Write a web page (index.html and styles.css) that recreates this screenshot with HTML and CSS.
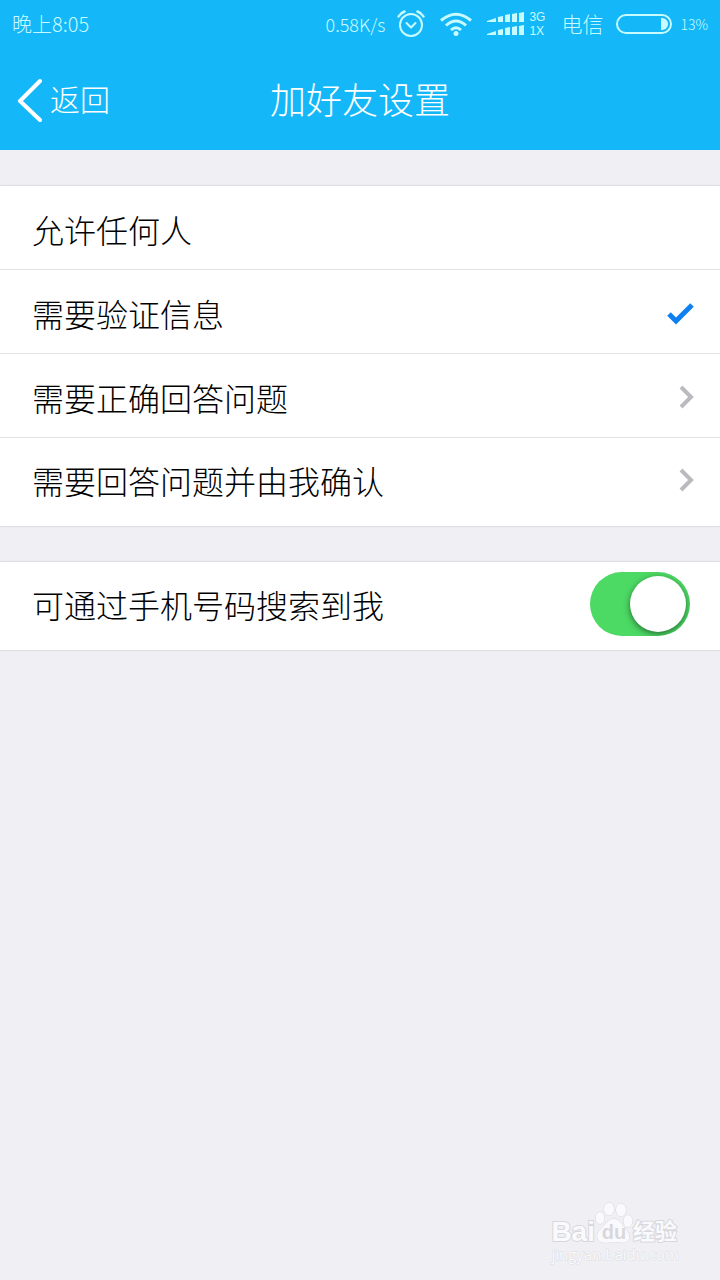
FILE: index.html
```html
<!DOCTYPE html>
<html lang="zh-CN">
<head>
    <meta charset="UTF-8">
    <meta name="viewport" content="width=device-width, initial-scale=1.0">
    <title>加好友设置</title>
    <link rel="stylesheet" href="styles.css">
</head>
<body>
    <header class="header">
        <div class="status-bar">
            <span class="status-time">晚上8:05</span>
            <span class="status-speed">0.58K/s</span>
            <svg class="icon-alarm" width="28" height="28" viewBox="0 0 28 28" fill="none" stroke="currentColor" stroke-width="2" stroke-linecap="round" stroke-linejoin="round">
                <circle cx="14" cy="15" r="11"/>
                <path d="M9.500 13l4.500 4.500 4.500-4.500"/>
                <path stroke-width="2.500" d="M1.500 6.500Q3.500 3 7.500 1.500M26.500 6.500Q24.500 3 20.500 1.500"/>
            </svg>
            <svg class="icon-wifi" width="32" height="24" viewBox="0 0 32 24" fill="none" stroke="currentColor" stroke-width="3">
                <path d="M1 8.500Q16-4 31 8.500M6 13.500Q16 4.500 26 13.500M11 18Q16 13.500 21 18"/>
                <circle cx="16" cy="21.500" r="2.500" fill="currentColor" stroke="none"/>
            </svg>
            <svg class="icon-signal" width="38" height="24" viewBox="0 0 38 24" fill="currentColor">
                <path d="M0 9l9-3v4H0zM11 5l5-1v6h-5zM18 3l5-1v8h-5zM25 2l5-1v9h-5zM32 1l5-1v10h-5z"/>
                <path d="M0 22l9-3v4H0zM11 18l5-1v6h-5zM18 16l5-1v8h-5zM25 15l5-1v9h-5zM32 14l5-1v10h-5z"/>
            </svg>
            <span class="network"><span>3G</span><span>1X</span></span>
            <span class="carrier">电信</span>
            <svg class="icon-battery" width="56" height="20" viewBox="0 0 56 20">
                <rect x="1" y="1" width="54" height="18" rx="9" fill="none" stroke="currentColor" stroke-width="2"/>
                <path d="M45 4h1a6 6 0 0 1 0 12h-1z" fill="currentColor"/>
            </svg>
            <span class="battery-level">13%</span>
        </div>
        <nav class="nav-bar">
            <a class="back" href="#">
                <svg width="26" height="48" viewBox="0 0 26 48" fill="none" stroke="currentColor" stroke-width="4" stroke-linecap="round" stroke-linejoin="round">
                    <path d="M24 7L4 27l20 19"/>
                </svg>
                <span>返回</span>
            </a>
            <h1>加好友设置</h1>
        </nav>
    </header>

    <main>
        <div class="group">
            <label class="row">
                <span>允许任何人</span>
                <input type="radio" name="verify" value="anyone">
                <svg class="check" width="28" height="24" viewBox="0 0 28 24" fill="none" stroke="currentColor" stroke-width="5"><path d="M3 13l7 7L26 4"/></svg>
            </label>
            <label class="row">
                <span>需要验证信息</span>
                <input type="radio" name="verify" value="message" checked>
                <svg class="check" width="28" height="24" viewBox="0 0 28 24" fill="none" stroke="currentColor" stroke-width="5"><path d="M3 13l7 7L26 4"/></svg>
            </label>
            <a class="row" href="#">
                <span>需要正确回答问题</span>
                <svg class="chevron" width="16" height="24" viewBox="0 0 16 24" fill="none" stroke="currentColor" stroke-width="4"><path d="M3 2l10 10L3 22"/></svg>
            </a>
            <a class="row" href="#">
                <span>需要回答问题并由我确认</span>
                <svg class="chevron" width="16" height="24" viewBox="0 0 16 24" fill="none" stroke="currentColor" stroke-width="4"><path d="M3 2l10 10L3 22"/></svg>
            </a>
        </div>

        <div class="group">
            <label class="row row-switch">
                <span>可通过手机号码搜索到我</span>
                <input class="switch" type="checkbox" role="switch" checked>
            </label>
        </div>
    </main>

    <div class="watermark">
        <div class="watermark-logo">
            <span>Bai</span>
            <span class="paw">
                <svg width="38" height="42" viewBox="0 0 38 42" fill="#fafafc" stroke="#d8d8dc">
                    <ellipse cx="5" cy="16" rx="4.500" ry="6"/>
                    <ellipse cx="14" cy="7" rx="5" ry="6.500"/>
                    <ellipse cx="26" cy="8" rx="5" ry="6.500"/>
                    <ellipse cx="33" cy="19" rx="4.500" ry="6"/>
                    <path d="M19 17c-6 0-8 5-12 9-4 3-6 7-4 11 2 4 7 4 10 3.500 4-.5 8-.5 12 0 4 .5 8 0 9-4 1-4-1-7-4-10-4-4-5-9.500-11-9.500z"/>
                </svg>
                <span class="paw-text">du</span>
            </span>
            <span class="watermark-cn">经验</span>
        </div>
        <div class="watermark-url">jingyan.baidu.com</div>
    </div>
</body>
</html>
```

FILE: styles.css
```css
* {
    box-sizing: border-box;
}
body {
    font-family: "Noto Sans CJK SC", sans-serif;
    font-weight: 300;
    background-color: #efeff4;
    color: #000;
    margin: 0;
    min-height: 100vh;
    position: relative;
}
a {
    color: inherit;
    text-decoration: none;
}
svg {
    flex-shrink: 0;
}
.header {
    background-color: #14b7f7;
    color: #fff;
}
.status-bar {
    display: flex;
    align-items: center;
    height: 48px;
    padding: 0 12px;
    color: #c8fbff;
}
.status-time {
    font-size: 20px;
    line-height: 24px;
    margin-right: auto;
}
.status-speed {
    font-size: 18px;
}
.icon-alarm {
    margin-left: 12px;
}
.icon-wifi {
    margin-left: 15px;
}
.icon-signal {
    margin-left: 15px;
}
.network {
    display: flex;
    flex-direction: column;
    margin-left: 4px;
    font-family: "Liberation Sans", sans-serif;
    font-size: 12px;
    font-weight: 400;
    line-height: 14px;
}
.carrier {
    font-size: 21px;
    line-height: 24px;
    margin-left: 16px;
    padding-bottom: 2px;
}
.icon-battery {
    margin-left: 13px;
}
.battery-level {
    font-size: 14px;
    margin-left: 8px;
}
.nav-bar {
    display: grid;
    grid-template-columns: 1fr auto 1fr;
    align-items: center;
    height: 102px;
    padding: 0 16px 2px;
}
.nav-bar h1 {
    font-size: 36px;
    font-weight: 300;
    line-height: 48px;
    margin: 0;
}
.back {
    display: flex;
    align-items: center;
    gap: 8px;
    font-size: 30px;
    line-height: 44px;
}
.group {
    margin-top: 36px;
    background-color: #fff;
    box-shadow: 0 0 2px #c0c0c4;
}
.row {
    display: flex;
    align-items: center;
    justify-content: space-between;
    min-height: 84px;
    padding: 2px 26px 0 32px;
    border-bottom: 1px solid #e2e2e4;
    font-size: 32px;
    line-height: 44px;
}
.row:last-child {
    min-height: 88px;
    padding-top: 0;
    padding-bottom: 4px;
    border-bottom: none;
}
.row span {
    flex: 1;
}
.row input[type="radio"] {
    appearance: none;
    width: 0;
    height: 0;
    margin: 0;
}
.check {
    color: #1080f0;
    visibility: hidden;
}
.row input:checked + .check {
    visibility: visible;
}
.chevron {
    color: #bbbbbf;
}
.row-switch {
    padding-right: 30px;
}
.switch {
    appearance: none;
    display: flex;
    align-items: center;
    width: 100px;
    height: 64px;
    margin: 0;
    padding: 0 4px;
    border-radius: 32px;
    background-color: #d8d8dc;
    overflow: hidden;
}
.switch::before {
    content: "";
    width: 56px;
    height: 56px;
    border-radius: 50%;
    background-color: #fff;
    box-shadow: 0 2px 6px rgba(0, 0, 0, 0.5);
}
.switch:checked {
    justify-content: flex-end;
    background-color: #4cd964;
}
.watermark {
    position: absolute;
    right: 41px;
    bottom: 16px;
    color: #fafafc;
    -webkit-text-stroke: 2px #d8d8dc;
    paint-order: stroke fill;
}
.watermark-logo {
    display: flex;
    align-items: flex-end;
    font-family: "Liberation Sans", "Noto Sans CJK SC", sans-serif;
    font-size: 28px;
    font-weight: 700;
    line-height: 24px;
}
.paw {
    display: grid;
    place-items: end center;
}
.paw > * {
    grid-area: 1 / 1;
}
.paw-text {
    color: #d8d8dc;
    font-size: 20px;
    line-height: 24px;
    -webkit-text-stroke: 0;
}
.watermark-cn {
    font-size: 22px;
}
.watermark-url {
    font-family: "Open Sans", sans-serif;
    font-size: 15px;
    font-weight: 400;
    line-height: 20px;
    text-align: center;
    -webkit-text-stroke: 1px #dcdce0;
}
```
